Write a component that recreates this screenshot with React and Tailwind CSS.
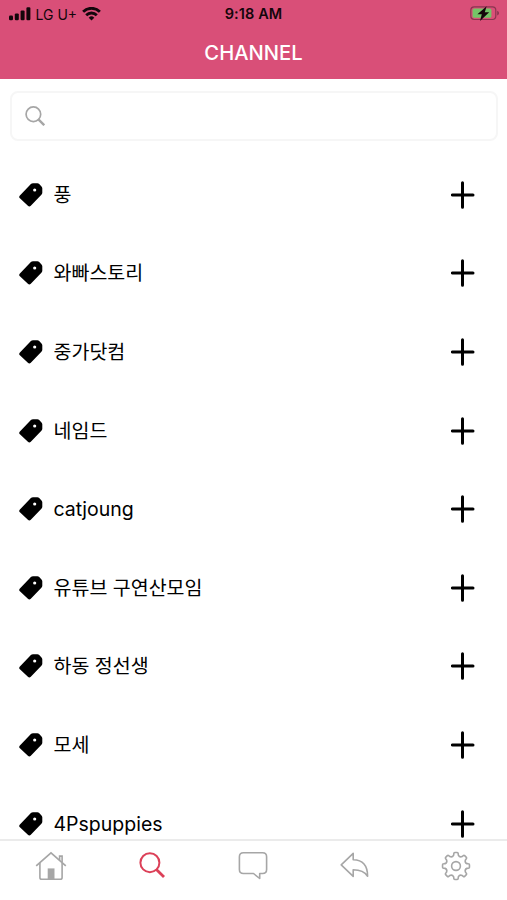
const channels = [
  "풍",
  "와빠스토리",
  "중가닷컴",
  "네임드",
  "catjoung",
  "유튜브 구연산모임",
  "하동 정선생",
  "모세",
  "4Pspuppies",
];

function SignalIcon() {
  return (
    <svg width="22" height="14" viewBox="0 0 22 14" className="fill-[#14060b]">
      <rect x="0" y="8.6" width="4" height="4.6" rx="1.2" />
      <rect x="5.8" y="6.4" width="4" height="6.8" rx="1.2" />
      <rect x="11.6" y="3.4" width="4" height="9.8" rx="1.2" />
      <rect x="17.4" y="0.2" width="4" height="13" rx="1.2" />
    </svg>
  );
}

function WifiIcon() {
  return (
    <svg width="19" height="14" viewBox="0 0 19 14" fill="none" stroke="#14060b" strokeWidth="2.8">
      <path d="M1.1 4.7a12 12 0 0 1 16.8 0" />
      <path d="M4.2 8.2a7.5 7.5 0 0 1 10.6 0" />
      <path d="M6.7 10.7a4 4 0 0 1 5.6 0L9.5 13.6z" fill="#14060b" stroke="none" />
    </svg>
  );
}

function BatteryIcon() {
  return (
    <svg width="30" height="16" viewBox="0 0 30 16">
      <rect x="0.8" y="0.9" width="25" height="12.6" rx="3.4" fill="none" stroke="#8a3450" strokeWidth="1.2" />
      <rect x="2.6" y="2.6" width="18.8" height="9.2" rx="1.6" fill="#74c467" />
      <path d="M27.2 4.8c2.4 1 2.4 3.8 0 4.8z" fill="#8a3450" />
      <path d="M16.6.2 7.4 8.3h4.4l-1.8 6.7 9.2-8.8h-4.4z" fill="#14060b" />
    </svg>
  );
}

function SearchIcon({ className, size, strokeWidth }) {
  return (
    <svg width={size} height={size} viewBox="0 0 26 26" fill="none" stroke="currentColor" className={className}>
      <circle cx="10.9" cy="10.7" r="9.5" strokeWidth={strokeWidth} />
      <path d="m17.4 17.4 7.6 7.6" strokeWidth={strokeWidth * 1.4} />
    </svg>
  );
}

function TagIcon() {
  return (
    <svg width="24" height="24" viewBox="0 0 24 24" className="mt-px">
      <path
        fillRule="evenodd"
        d="M11.9 1Q12.8.2 14 .2h4.4q1.1 0 1.8.7l2.3 2.5q.8.8.8 1.9v4.5q0 1.2-.9 2L11.8 22.8q-1.5 1.3-2.9 0L.9 15.3q-1.4-1.4 0-2.8zM15.7 5.4a1.6 1.6 0 1 0 0 3.2 1.6 1.6 0 0 0 0-3.2z"
      />
    </svg>
  );
}

function PlusIcon() {
  return (
    <svg width="24" height="28" viewBox="0 0 24 28" stroke="#000" strokeWidth="3" strokeLinecap="round">
      <path d="M11.5 1.8v24.4M1.4 14h20.6" />
    </svg>
  );
}

function HomeIcon() {
  return (
    <svg width="32" height="30" viewBox="0 0 32 30" fill="none" stroke="#a6a6a6" strokeWidth="1.6">
      <path d="m1.2 14.9 14.8-13 14.8 13" strokeWidth="1.7" />
      <path d="M4.9 12v14.4q0 1.8 1.8 1.8h18.6q1.8 0 1.8-1.8V12" />
      <path d="M24.6 9V5.1h2.5V11" />
      <path d="M12.7 17.4h6.8v10.8h-6.8z" fill="#a6a6a6" stroke="none" />
    </svg>
  );
}

function ChatIcon() {
  return (
    <svg width="30" height="30" viewBox="0 0 30 30" fill="none" stroke="#a6a6a6" strokeWidth="1.6" strokeLinejoin="round">
      <path d="M5.4 1.8h19.2q4 0 4 4v12.7q0 4-4 4h-2.9v5l-6.2-5H5.4q-4 0-4-4V5.8q0-4 4-4z" />
    </svg>
  );
}

function ReplyIcon() {
  return (
    <svg width="30" height="30" viewBox="0 0 30 30" fill="none" stroke="#a6a6a6" strokeWidth="1.6" strokeLinejoin="round">
      <path d="M1.2 13.9 13.2 2.3v6.5c9.1.2 14.4 5 14.4 16.4-2.9-4.6-7.2-6.4-14.4-6.4v6.6z" />
    </svg>
  );
}

// one tooth of the gear, repeated every 45 degrees
function gearPath() {
  const at = (r, deg) => {
    const a = (deg * Math.PI) / 180;
    return `${(15 + r * Math.sin(a)).toFixed(2)} ${(15 - r * Math.cos(a)).toFixed(2)}`;
  };
  let d = "";
  for (let i = 0; i < 8; i++) {
    const a = i * 45;
    d += `${i ? "L" : "M"}${at(11.2, a - 12)}L${at(12.6, a - 10)}Q${at(13.6, a - 9)} ${at(13.5, a - 5)}`;
    d += `L${at(13.5, a + 5)}Q${at(13.6, a + 9)} ${at(12.6, a + 10)}L${at(11.2, a + 12)}`;
    d += `Q${at(9.2, a + 22.5)} ${at(11.2, a + 33)}`;
  }
  return d + "Z";
}

function GearIcon() {
  return (
    <svg width="30" height="30" viewBox="0 0 30 30" fill="none" stroke="#a6a6a6" strokeWidth="1.6" strokeLinejoin="round">
      <path d={gearPath()} />
      <circle cx="15" cy="15" r="4.4" />
    </svg>
  );
}

function ChannelRow({ name }) {
  return (
    <li className="flex h-[78.6px] shrink-0 items-center pr-8 pl-[19px]">
      <TagIcon />
      <span className="ml-[10.5px] flex-1 pt-px text-[19.5px] leading-7 whitespace-nowrap text-black">{name}</span>
      <button aria-label="Add" className="pt-px">
        <PlusIcon />
      </button>
    </li>
  );
}

export default function App() {
  return (
    <div className="flex h-[900px] w-[507px] flex-col overflow-hidden bg-white font-[Inter,'Noto_Sans_CJK_KR',sans-serif]">
      <header className="h-[79px] shrink-0 bg-[#d94f78]">
        <div className="grid h-7 grid-cols-3 items-center px-2 text-[#14060b]">
          <div className="flex items-center pl-[0.5px]">
            <SignalIcon />
            <span className="mr-[5px] ml-[5px] text-[14px] whitespace-nowrap">LG U+</span>
            <WifiIcon />
          </div>
          <span className="text-center text-[14.5px] font-semibold tracking-[0.1px]">9:18 AM</span>
          <div className="-mr-px flex justify-end">
            <BatteryIcon />
          </div>
        </div>
        <h1 className="pt-px text-center text-[20.2px] leading-12 font-medium text-white">CHANNEL</h1>
      </header>

      <main className="flex min-h-0 flex-1 flex-col overflow-hidden">
        <div className="mt-3 mr-[9px] ml-[10px] flex h-[50px] shrink-0 items-center rounded-lg border-2 border-[#f6f6f6] pl-[13px]">
          <SearchIcon size={20} strokeWidth={2.2} className="text-[#a6a6a6]" />
        </div>
        <ul className="mt-[14px] flex flex-col">
          {channels.map((name) => (
            <ChannelRow key={name} name={name} />
          ))}
        </ul>
      </main>

      <nav className="grid h-[61px] shrink-0 grid-cols-5 justify-items-center border-t-2 border-[#ebebeb] pt-[10px]">
        <HomeIcon />
        <SearchIcon size={26} strokeWidth={2} className="mt-px text-[#dc4058]" />
        <ChatIcon />
        <ReplyIcon />
        <GearIcon />
      </nav>
    </div>
  );
}
